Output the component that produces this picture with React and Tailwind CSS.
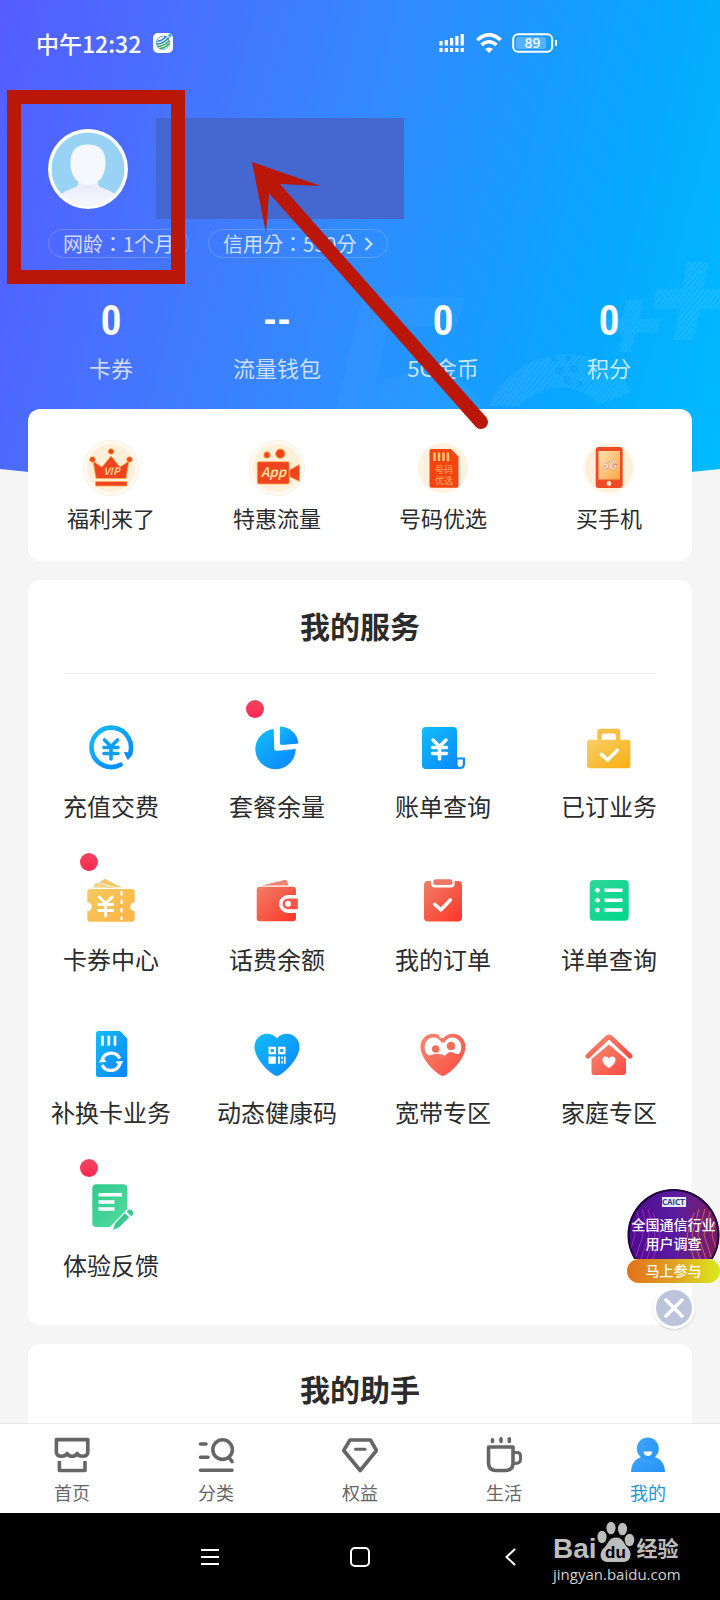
const Gradient = ({ id, from, to }) => (
  <linearGradient id={id} x1="0" y1="0" x2="1" y2="1">
    <stop offset="0" stopColor={from} />
    <stop offset="1" stopColor={to} />
  </linearGradient>
);

// Shared gradients, referenced by every icon below
const IconDefs = () => (
  <svg className="absolute h-0 w-0" aria-hidden="true">
    <defs>
      <Gradient id="blue" from="#12bdf5" to="#0a84ff" />
      <Gradient id="yellow" from="#f6cf6b" to="#fbae0c" />
      <Gradient id="gold" from="#f5c95f" to="#fcb445" />
      <Gradient id="red" from="#ee8068" to="#ff3427" />
      <Gradient id="coral" from="#f08a70" to="#ff4a42" />
      <Gradient id="green" from="#2fd79a" to="#00d68b" />
      <Gradient id="mint" from="#31c98c" to="#55dba2" />
      <Gradient id="tabBlue" from="#41a5fb" to="#2493f5" />
      <Gradient id="screen" from="#ffe3ad" to="#ffa64a" />
    </defs>
  </svg>
);

const Yen = ({ x, y, stroke = "#fff", width = 3.4 }) => (
  <path
    d={`M${x - 6.5} ${y - 9}L${x} ${y - 2.5}L${x + 6.5} ${y - 9}M${x - 7} ${y - 1.5}H${x + 7}M${x - 7} ${y + 4.5}H${x + 7}M${x} ${y - 2}V${y + 10}`}
    fill="none"
    stroke={stroke}
    strokeWidth={width}
    strokeLinecap="round"
    strokeLinejoin="round"
  />
);

const HEART = "M24 46C20 46 1.500 30 1.500 17C1.500 9 7.500 3.700 14 3.700C18 3.700 22 5.500 24 8.500C26 5.500 30 3.700 34 3.700C40.500 3.700 46.500 9 46.500 17C46.500 30 28 46 24 46Z";

const serviceIcons = {
  recharge: (
    <>
      <path d="M33.500 40.700A19.700 19.700 0 1 1 42.400 31" fill="none" stroke="url(#blue)" strokeWidth="4.600" strokeLinecap="round" />
      <path d="M37.500 28.500L45.500 29.500L41 35.500Z" fill="#0a8cfb" stroke="#0a8cfb" strokeLinejoin="round" />
      <Yen x={24} y={25} stroke="#0c9ef9" width={3.600} />
    </>
  ),
  pie: (
    <>
      <path d="M20.700 5A20.200 20.200 0 1 0 42.700 25L24.500 26.800Q21.300 27 21.200 24Z" fill="url(#blue)" />
      <path d="M27 2.600Q43 4 45.500 19.500L29 21Q27 21 26.900 19Z" fill="url(#blue)" />
    </>
  ),
  bill: (
    <>
      <path d="M3 7Q3 3 7 3H34Q38 3 38 7V33.500H46V40Q46 45 41 45H7Q3 45 3 41Z" fill="url(#blue)" />
      <path d="M38.800 35.500H43.800V39.500Q43.800 43 41 43Q38.500 43 38.500 40Z" fill="#fff" />
      <Yen x={20.500} y={25} />
    </>
  ),
  briefcase: (
    <>
      <path d="M12.300 17V7.700Q12.300 4.700 15.300 4.700H32.300Q35.300 4.700 35.300 7.700V17H31V12Q31 9.500 28.500 9.500H19Q16.500 9.500 16.500 12V17Z" fill="#f6bf45" />
      <rect x="2" y="15.700" width="43.400" height="28.600" rx="3" fill="url(#yellow)" />
      <path d="M16.500 30.500L22.800 35.800L32.300 26.200" fill="none" stroke="#fff" strokeWidth="3.600" strokeLinecap="round" strokeLinejoin="round" />
    </>
  ),
  ticket: (
    <>
      <path d="M6 10.500L8 6.500Q9 5.500 11 6L29 11Z" fill="#f3d284" />
      <path d="M12 5.500L17 2.300Q18.500 1.700 20 2.700L35 10.700L28 10Z" fill="#f4c866" />
      <path d="M3.300 12H44.700Q47.700 12 47.700 15V25.200A4.500 4.500 0 0 0 47.700 34.200V41.700Q47.700 44.700 44.700 44.700H3.300Q.3 44.700 .3 41.700V34.200A4.500 4.500 0 0 0 .3 25.200V15Q.3 12 3.300 12Z" fill="url(#gold)" />
      <path d="M34.500 14V43" stroke="#fff" strokeWidth="2.200" strokeDasharray="4.500 4" />
      <Yen x={18.700} y={29} width={2.800} />
    </>
  ),
  wallet: (
    <>
      <path d="M8.700 8.500L31.500 3Q34 2.500 34.500 4.500L35.200 8.500Z" fill="#ef8570" />
      <rect x="3.700" y="9.700" width="39.300" height="34.600" rx="3" fill="url(#red)" />
      <path d="M46 18H35A9 9 0 0 0 35 36H46Z" fill="#fff" />
      <path d="M44.800 21.400H35A5.300 5.300 0 0 0 35 32.200H44.800Z" fill="#fb5549" />
      <circle cx="35" cy="26.800" r="3" fill="#fff" />
    </>
  ),
  order: (
    <>
      <rect x="5" y="4" width="38" height="40.500" rx="4" fill="url(#red)" />
      <rect x="12" y="-2" width="23.700" height="12.400" rx="4" fill="#fff" />
      <rect x="14.300" y="2.300" width="19.200" height="5.700" rx="2.500" fill="#ec7764" />
      <path d="M15.800 27.500L22 32.800L31.300 23" fill="none" stroke="#fff" strokeWidth="3.600" strokeLinecap="round" strokeLinejoin="round" />
    </>
  ),
  detail: (
    <>
      <rect x="4.700" y="3" width="39" height="40.700" rx="4" fill="url(#green)" />
      <path d="M19.500 13.300H37.500M19.500 23.300H37.500M19.500 33H37.500" stroke="#fff" strokeWidth="3.400" />
      <circle cx="12.500" cy="13.300" r="2.300" fill="#fff" />
      <circle cx="12.500" cy="23.300" r="2.300" fill="#fff" />
      <circle cx="12.500" cy="33" r="2.300" fill="#fff" />
    </>
  ),
  sim: (
    <>
      <path d="M9 3.500Q9 1 11.500 1H33L40.300 8.500V44.500Q40.300 47 37.800 47H11.500Q9 47 9 44.500Z" fill="url(#blue)" />
      <path d="M15.500 5.700V15.700M21.800 5.700V15.700M28 5.700V15.700" stroke="#fff" strokeWidth="2.600" />
      <path d="M15.200 29.500A9.500 9.500 0 0 1 32.800 28.500M32.800 34A9.500 9.500 0 0 1 15.200 35" fill="none" stroke="#fff" strokeWidth="3.200" />
      <path d="M11.800 32.500L15.500 26.500L19.500 32Z M36.300 31L32.500 37L28.500 31.500Z" fill="#fff" />
    </>
  ),
  health: (
    <>
      <path d={HEART} fill="url(#blue)" />
      <path d="M16.600 17.900H21.900V23.200H16.600ZM26.100 17.900H31.400V23.200H26.100Z" fill="none" stroke="#fff" strokeWidth="2.200" />
      <path d="M15.500 26.500H22.800V33.700H15.500ZM25 26.500H27V33.700H25ZM28.200 26.500H29.700V29H28.200ZM28.200 30.700H29.700V33.700H28.200ZM30.900 26.500H32.600V33.700H30.900Z" fill="#fff" />
    </>
  ),
  broadband: (
    <>
      <path d={HEART} fill="url(#coral)" />
      <path d="M6 20C4.500 12.500 9 7.500 14.500 7.500C18.500 7.500 21 9.500 22.500 12.500L25.500 12.500C27 9.500 29.500 7.500 33.500 7.500C39 7.500 43.500 12.500 42 20C41 24.500 38 24.500 36 23.500C33 21.500 31 21.500 29 23C27 24.500 26 26.500 24.500 26C22 24 19 23 15 25C10 26.500 7 25 6 20Z" fill="#fff" />
      <path d="M22.300 8L20.500 5.500" stroke="#fff" strokeWidth="1.600" />
      <circle cx="16.700" cy="19" r="3.800" fill="#f0705e" />
      <circle cx="32" cy="16" r="4.300" fill="#f0705e" />
      <path d="M9 28C12 23.500 18 23 21 25.500C24 22 27 27 25 29Z" fill="#f56f5e" />
    </>
  ),
  family: (
    <>
      <path d="M3 26L22 8Q24 6.300 26 8L45 26" fill="none" stroke="url(#coral)" strokeWidth="5" strokeLinecap="round" />
      <path d="M24 14.500L41 29V42Q41 45 38 45H9.500Q6.500 45 6.500 42V29Z" fill="url(#coral)" />
      <path d="M24 38C22 37 17.500 33.500 17.500 29.500C17.500 26 22 25.500 24 28.500C26 25.500 30.500 26 30.500 29.500C30.500 33.500 26 37 24 38Z" fill="#fff" />
    </>
  ),
  feedback: (
    <>
      <path d="M5.300 5.300Q5.300 1.300 9.300 1.300H36.300Q40.300 1.300 40.300 5.300V26L23 44H9.300Q5.300 44 5.300 40Z" fill="url(#mint)" />
      <path d="M11.500 11.800H35M11.500 19H27.500M11.500 26H27.500" stroke="#fff" strokeWidth="3.600" />
      <path d="M25.500 47.500L28 40L38 29.800L42.500 34.200L32.500 44.300Z" fill="#3bc98f" stroke="#fff" strokeWidth=".6" />
      <path d="M39.500 28.500L41.500 26.800Q43.500 26 45.500 28Q47.300 30 46.200 31.500L44 33.300Z" fill="#3bc98f" />
    </>
  ),
};

const quickIcons = {
  vip: (
    <>
      <circle cx="28" cy="28" r="27.500" fill="#fffaf2" stroke="#fbf0df" />
      <circle cx="28" cy="28" r="24" fill="#fdefd8" />
      <g fill="#f0431f" stroke="#f9b04c" strokeWidth=".8">
        <path d="M10 21L13 38.500H43L46 21L37 27L28 16L19 27Z" />
        <rect x="12.500" y="41.500" width="31.500" height="4.500" rx=".5" />
        <circle cx="28" cy="11.500" r="2.800" />
        <circle cx="9.500" cy="19.500" r="2.800" />
        <circle cx="46.500" cy="19.500" r="2.800" />
      </g>
      <text x="28.500" y="35" textAnchor="middle" fontSize="10" fontWeight="700" fontStyle="italic" fill="#fbd28b">VIP</text>
    </>
  ),
  app: (
    <>
      <circle cx="28" cy="28" r="27.500" fill="#fffaf2" stroke="#fbf0df" />
      <circle cx="28" cy="28" r="24" fill="#fdefd8" />
      <g fill="#f0431f" stroke="#f9b04c" strokeWidth=".8">
        <rect x="8.300" y="21.700" width="32" height="22.300" rx="1.500" />
        <path d="M40.300 30L50.500 24.500V41.500L40.300 36.500Z" />
        <circle cx="18" cy="15" r="3.200" />
        <circle cx="31.300" cy="13.700" r="4.700" />
      </g>
      <text x="24.500" y="37" textAnchor="middle" fontSize="13" fontWeight="700" fontStyle="italic" fill="#fbdc9a">App</text>
    </>
  ),
  number: (
    <>
      <circle cx="28" cy="28" r="25" fill="#fdf2de" />
      <path d="M14.500 11Q14.500 9 16.500 9H36L43.500 16.500V45.700Q43.500 47.700 41.500 47.700H16.500Q14.500 47.700 14.500 45.700Z" fill="#f4440f" />
      <path d="M19.500 12.500V21M24 12.500V21M28.500 12.500V21M33 12.500V21" stroke="#fbc87c" strokeWidth="2.400" />
      <text x="29" y="33" textAnchor="middle" fontSize="9" fill="#fdb06a">号码</text>
      <text x="29" y="43.500" textAnchor="middle" fontSize="9" fill="#fdb06a">优选</text>
    </>
  ),
  phone: (
    <>
      <circle cx="28" cy="28" r="27" fill="#fffaf2" />
      <circle cx="28" cy="28" r="24" fill="#fdefd8" />
      <rect x="14.700" y="7" width="27" height="41" rx="3" fill="#ee4a24" />
      <rect x="17.500" y="11" width="21.500" height="28.500" fill="url(#screen)" />
      <text x="28.300" y="29" textAnchor="middle" fontSize="11" fontWeight="700" fontStyle="italic" fill="#fff" stroke="#b9472a" strokeWidth=".3">5G</text>
      <circle cx="28" cy="43.500" r="2.400" fill="#fde6c2" />
    </>
  ),
};

const tabIcons = {
  home: (
    <g fill="none" stroke="#666" strokeWidth="3.600" strokeLinejoin="round">
      <path d="M2.400 2.600H33.800V15.500Q33.300 19.300 28.800 19.300Q24.500 19.300 23.200 16.500Q21.500 19.300 18.100 19.300Q14.700 19.300 13 16.500Q11.700 19.300 7.400 19.300Q2.900 19.300 2.400 15.500Z" />
      <path d="M5.400 24V33.500H31V24" />
    </g>
  ),
  category: (
    <g fill="none" stroke="#666" strokeWidth="3.600" strokeLinecap="round">
      <circle cx="24.600" cy="12.600" r="9.800" />
      <path d="M31 20.500L34 24.500M2.500 7H8M2.500 20.300H10M2.500 33.300H34" />
    </g>
  ),
  rights: (
    <g fill="none" stroke="#666" strokeWidth="3.600" strokeLinejoin="round" strokeLinecap="round">
      <path d="M8 3H28.500L34.500 13.500L18.200 33.500L1.700 13.500Z" />
      <path d="M13.500 12.300H23" strokeWidth="3" />
    </g>
  ),
  life: (
    <g fill="none" stroke="#666" strokeWidth="3.600" strokeLinejoin="round">
      <path d="M2.500 10H27V26Q27 33.500 19.500 33.500H10Q2.500 33.500 2.500 26Z" />
      <path d="M28 15.500H31Q34.500 15.500 34.500 19V22.500Q34.500 26.500 28 26.500" strokeWidth="3" />
      <path d="M6.500 2.800V4.500M15 1.800V4.500M23.300 1.800V4.500" strokeLinecap="round" />
    </g>
  ),
  mine: (
    <>
      <path d="M1 35Q1.500 22 13 19.500H23Q34.500 22 35 35Z" fill="url(#tabBlue)" />
      <circle cx="17.800" cy="11.500" r="11" fill="url(#tabBlue)" />
      <path d="M13.300 14.500H22.500Q21.500 19 18 19Q14.300 19 13.300 14.500Z" fill="#fff" />
    </>
  ),
};

const stats = [
  { value: "0", label: "卡券" },
  { value: "--", label: "流量钱包" },
  { value: "0", label: "5G金币" },
  { value: "0", label: "积分" },
];

const quickLinks = [
  { icon: "vip", label: "福利来了" },
  { icon: "app", label: "特惠流量" },
  { icon: "number", label: "号码优选" },
  { icon: "phone", label: "买手机" },
];

const services = [
  { icon: "recharge", label: "充值交费" },
  { icon: "pie", label: "套餐余量", dot: true },
  { icon: "bill", label: "账单查询" },
  { icon: "briefcase", label: "已订业务" },
  { icon: "ticket", label: "卡券中心", dot: true },
  { icon: "wallet", label: "话费余额" },
  { icon: "order", label: "我的订单" },
  { icon: "detail", label: "详单查询" },
  { icon: "sim", label: "补换卡业务" },
  { icon: "health", label: "动态健康码" },
  { icon: "broadband", label: "宽带专区" },
  { icon: "family", label: "家庭专区" },
  { icon: "feedback", label: "体验反馈", dot: true },
];

const tabs = [
  { icon: "home", label: "首页" },
  { icon: "category", label: "分类" },
  { icon: "rights", label: "权益" },
  { icon: "life", label: "生活" },
  { icon: "mine", label: "我的", active: true },
];

const HeaderBackground = () => (
  <div className="absolute inset-x-0 top-0 h-[489px] overflow-hidden bg-[linear-gradient(105deg,#555cff_0%,#4a6eff_20%,#338aff_48%,#08a6ff_78%,#00bcff_100%)] [clip-path:ellipse(177%_100%_at_50%_0)]">
    <svg className="absolute right-0 top-0" width="400" height="489" viewBox="320 0 400 489" aria-hidden="true">
      <defs>
        <pattern id="hatch" width="4" height="4" patternUnits="userSpaceOnUse" patternTransform="rotate(40)">
          <rect width="2" height="4" fill="#fff" fillOpacity=".05" />
          <rect width="4" height="4" fill="#fff" fillOpacity=".03" />
        </pattern>
      </defs>
      <path d="M362 297H465L456 326H388L376 385Q440 350 480 400V420H334Z" fill="#fff" fillOpacity=".03" />
      <path d="M488 406Q516 354 570 354Q612 356 632 392L600 404Q560 370 518 406Z" fill="url(#hatch)" />
      <path d="M687 262H709L703 289H728V309H700L693 340H673L680 309H653L656 289H682Z" fill="url(#hatch)" />
      <path d="M626 300H643L639 319H660L657 333H636L631 352H619L623 333H603L607 319H622Z" fill="url(#hatch)" />
      <g fill="#0a8ff0" fillOpacity=".3">
        <circle cx="554" cy="359" r="3" />
        <circle cx="569" cy="358" r="3" />
        <circle cx="559" cy="371" r="4" />
        <circle cx="574" cy="369" r="4" />
        <circle cx="567" cy="380" r="4" />
        <circle cx="580" cy="384" r="3" />
      </g>
    </svg>
  </div>
);

const StatusBar = () => (
  <div className="flex h-[30px] items-center justify-between pl-9 pr-[162px] text-white">
    <div className="flex items-center gap-3">
      <span className="text-[23px] font-medium leading-[28px]">中午12:32</span>
      <svg width="20" height="20" viewBox="0 0 20 20" aria-hidden="true">
        <rect width="20" height="20" rx="5" fill="#fff" />
        <g fill="none" strokeWidth="1.600" strokeLinecap="round">
          <path d="M5 8Q9 8 13 3.500M4 11Q10 11 15.500 5" stroke="#2a7fd0" />
          <path d="M4.500 13.500Q11 13 16 8M7 15.500Q12 15 15.500 11" stroke="#3aa55c" />
          <circle cx="10" cy="9.800" r="6.600" stroke="#3b97b8" strokeWidth=".8" />
        </g>
        <circle cx="17" cy="2.500" r="1.800" fill="#4ab0ea" />
      </svg>
    </div>
    <div className="flex items-center">
      <svg width="25" height="20" viewBox="0 0 25 20" fill="none" stroke="#fff" strokeWidth="3.200" aria-hidden="true">
        <path d="M2 15V19M7.300 15V19M12.600 15V19M17.900 15V19M23.200 15V19M2 8V12.500M7.300 7V12.500M12.600 5V12.500M17.900 3V12.500M23.200 1V12.500" />
      </svg>
      <svg className="ml-3" width="26" height="20" viewBox="0 0 26 20" fill="none" stroke="#fff" strokeWidth="3.600" aria-hidden="true">
        <path d="M1.300 7Q13-3.500 24.700 7M5.500 12Q13 5.500 20.500 12" />
        <path d="M9 16Q13 13 17 16L13 20Z" fill="#fff" stroke="none" />
      </svg>
      <svg className="ml-2.5" width="46" height="20" viewBox="0 0 46 20" aria-hidden="true">
        <rect x="1.200" y="1.200" width="39" height="17.600" rx="5" fill="none" stroke="#fff" strokeWidth="2" />
        <rect x="4" y="4" width="30" height="12" rx="2" fill="#fff" fillOpacity=".25" />
        <path d="M44 7V13" stroke="#fff" strokeWidth="2" />
        <text x="20.500" y="15" textAnchor="middle" fontSize="14" fontWeight="500" fill="#fff">89</text>
      </svg>
    </div>
  </div>
);

const Avatar = () => (
  <svg width="80" height="80" viewBox="0 0 80 80" aria-hidden="true">
    <defs>
      <clipPath id="face">
        <circle cx="40" cy="40" r="37" />
      </clipPath>
      <linearGradient id="neck" x1="0" y1="0" x2="0" y2="1">
        <stop offset="0" stopColor="#e4e9f9" />
        <stop offset="1" stopColor="#f9faff" />
      </linearGradient>
    </defs>
    <circle cx="40" cy="40" r="40" fill="#fff" />
    <circle cx="40" cy="40" r="36.500" fill="#98d3f5" />
    <g clipPath="url(#face)">
      <path d="M8 70Q14 62 28 58Q31 56 30 50H50Q49 56 52 58Q66 62 72 70V80H8Z" fill="url(#neck)" />
      <path d="M40 15.500C52 15.500 57.500 22 57.500 34C57.500 48 49 56.500 40 56.500C31 56.500 22.500 48 22.500 34C22.500 22 28 15.500 40 15.500Z" fill="#f7f8ff" />
    </g>
  </svg>
);

const Profile = () => (
  <div className="mt-[71px] px-12">
    <button type="button" aria-label="头像" className="block h-20 w-20 rounded-full">
      <Avatar />
    </button>
    <div className="mt-5 flex gap-[19px] font-['Noto_Sans_CJK_TC','Noto_Sans_CJK_SC',sans-serif] text-xl leading-[27px] text-white/75">
      <a href="#age" className="rounded-full border border-white/20 px-[14px]">
        网龄：1个月
      </a>
      <a href="#credit" className="flex items-center gap-2 rounded-full border border-white/20 px-[14px]">
        信用分：550分
        <svg width="9" height="14" viewBox="0 0 9 14" fill="none" stroke="currentColor" strokeWidth="2" aria-hidden="true">
          <path d="M1.500 1L7.500 7L1.500 13" />
        </svg>
      </a>
    </div>
  </div>
);

const Stats = () => (
  <div className="mx-7 mt-[43px] grid grid-cols-4 text-center text-white">
    {stats.map((item) => (
      <a key={item.label} href="#stats" className="block">
        <div className="font-['Roboto_Condensed','Open_Sans_Condensed','Noto_Sans_Condensed','DejaVu_Sans_Condensed','Roboto',sans-serif] text-[42px] font-semibold leading-10">
          {item.value}
        </div>
        <div className="mt-[11px] text-[22px] leading-[30px] text-white/75">{item.label}</div>
      </a>
    ))}
  </div>
);

const QuickLinks = () => (
  <section className="mx-7 mt-[27px] grid grid-cols-4 rounded-xl bg-white pb-[29px] pt-[31px]">
    {quickLinks.map((item) => (
      <a key={item.label} href="#quick" className="flex flex-col items-center gap-1.5">
        <svg width="56" height="56" viewBox="0 0 56 56" aria-hidden="true">
          {quickIcons[item.icon]}
        </svg>
        <span className="text-[22px] leading-[30px]">{item.label}</span>
      </a>
    ))}
  </section>
);

const Services = () => (
  <section className="mx-7 mt-[19px] rounded-xl bg-white pb-11 pt-[27px]">
    <h2 className="mx-9 border-b border-[#ececec] pb-[30px] text-center text-[30px] font-bold leading-9">我的服务</h2>
    <div className="mt-[50px] grid grid-cols-4 gap-y-[55px]">
      {services.map((item) => (
        <a key={item.label} href="#service" className="flex flex-col items-center gap-[18px]">
          <span className="relative">
            <svg width="48" height="48" viewBox="0 0 48 48" aria-hidden="true">
              {serviceIcons[item.icon]}
            </svg>
            {item.dot && (
              <span className="absolute -left-[7px] -top-6 h-[18px] w-[18px] rounded-full bg-linear-to-b from-[#ee4460] to-[#ff2350]" />
            )}
          </span>
          <span className="whitespace-nowrap text-2xl leading-8">{item.label}</span>
        </a>
      ))}
    </div>
  </section>
);

const SurveyBadge = () => (
  <div className="absolute bottom-[94px] right-0 flex w-[93px] flex-col items-center">
    <a href="#survey" className="block w-full text-center font-medium text-white">
      <div className="relative h-[70px] bg-linear-to-r from-[#4c0a8c] via-[#5a1aa0] to-[#7a1763] [clip-path:circle(46px_at_50%_46px)]">
        <svg className="absolute inset-0" width="93" height="70" viewBox="0 0 93 70" fill="none" aria-hidden="true">
          <g stroke="#b02fd0" strokeOpacity=".75">
            <path d="M3 26L8 46L2 66M9 20L16 46L8 70M15 20L22 46L14 70M21 20L28 46L20 70M26 24L33 46L26 70" />
          </g>
          <g stroke="#f0705a" strokeOpacity=".75">
            <path d="M90 26L85 46L91 66M84 20L77 46L85 70M78 20L71 46L79 70M72 20L65 46L73 70M67 24L60 46L67 70" />
          </g>
          <circle cx="46.500" cy="46" r="45" stroke="#1d0836" strokeWidth="2" />
        </svg>
        <div className="relative pt-2">
          <div className="mx-auto w-6 bg-[#e9ecf5] text-[8px] font-bold leading-[10px] text-[#1f3c8c]">CAICT</div>
          <div className="mt-2 whitespace-nowrap text-sm leading-[19px]">全国通信行业</div>
          <div className="text-sm leading-[19px]">用户调查</div>
        </div>
      </div>
      <div className="h-6 rounded-full bg-linear-to-r from-[#e2711c] via-[#dfa024] to-[#d8ea1c] text-sm leading-[22px]">马上参与</div>
    </a>
    <button
      type="button"
      aria-label="关闭"
      className="mt-1 flex h-[42px] w-[42px] items-center justify-center rounded-full border-[3px] border-white bg-[#bcc4dc] shadow-sm"
    >
      <svg width="20" height="20" viewBox="0 0 20 20" stroke="#fff" strokeWidth="3.500" strokeLinecap="round" aria-hidden="true">
        <path d="M2 2L18 18M18 2L2 18" />
      </svg>
    </button>
  </div>
);

// Red frame, masked name and arrow drawn over the profile area
const Annotations = () => (
  <>
    <div className="pointer-events-none absolute left-[156px] top-[118px] h-[101px] w-[248px] bg-[#4467d0]" />
    <div className="pointer-events-none absolute left-[7px] top-[90px] h-[194px] w-[178px] border-[14px] border-[#bb1709]" />
    <svg className="pointer-events-none absolute left-[240px] top-[150px]" width="260" height="290" viewBox="240 150 260 290" aria-hidden="true">
      <path d="M274 188L481 422" stroke="#bb1709" strokeWidth="14" strokeLinecap="round" />
      <path d="M252 162L321 186L281 184L269 193L266 233Z" fill="#bb1709" />
    </svg>
  </>
);

const TabBar = () => (
  <nav className="grid h-[90px] shrink-0 grid-cols-5 border-t border-[#e9e9e9] bg-white pt-[13px]">
    {tabs.map((tab) => (
      <a key={tab.label} href="#tab" className="flex flex-col items-center gap-[7px]">
        <svg width="36" height="36" viewBox="0 0 36 36" aria-hidden="true">
          {tabIcons[tab.icon]}
        </svg>
        <span className={tab.active ? "text-lg leading-6 text-[#1b98dd]" : "text-lg leading-6 text-[#666]"}>{tab.label}</span>
      </a>
    ))}
  </nav>
);

const Watermark = () => (
  <div className="absolute right-10 top-2 w-[127px] whitespace-nowrap font-['Liberation_Sans','Noto_Sans_CJK_SC',sans-serif] text-[#bdbdbd]">
    <div className="flex h-[42px] items-end">
      <span className="text-[28px] font-bold leading-7">Bai</span>
      <svg className="shrink-0" width="38" height="42" viewBox="0 0 38 42" fill="#bdbdbd" aria-hidden="true">
        <ellipse cx="5" cy="16" rx="4.600" ry="6.200" />
        <ellipse cx="14" cy="7" rx="4.600" ry="6.300" />
        <ellipse cx="25.500" cy="8" rx="4.600" ry="6.300" />
        <ellipse cx="32.500" cy="19" rx="4.800" ry="6.200" />
        <path d="M19 16.500C26 16.500 27 23 31 27C35 31 35 41 26 41H11C2 41 2 31 7 27C11 23 12 16.500 19 16.500Z" />
        <text x="18.500" y="36.500" textAnchor="middle" fontSize="17" fontWeight="700" fill="#000">du</text>
      </svg>
      <span className="ml-0.5 text-[21px] font-bold leading-7">经验</span>
    </div>
    <div className="font-['Open_Sans','Noto_Sans',sans-serif] text-[15px] leading-[22px] text-[#d0d0d0]">jingyan.baidu.com</div>
  </div>
);

const SystemBar = () => (
  <div className="relative flex h-[87px] shrink-0 items-center justify-center gap-[102px] bg-black">
    <button type="button" aria-label="菜单" className="flex h-12 w-12 items-center justify-center">
      <svg width="18" height="16" viewBox="0 0 18 16" stroke="#fff" strokeWidth="2">
        <path d="M0 1H18M0 8H18M0 15H18" />
      </svg>
    </button>
    <button type="button" aria-label="主页" className="flex h-12 w-12 items-center justify-center">
      <svg width="20" height="20" viewBox="0 0 20 20" fill="none" stroke="#fff" strokeWidth="2">
        <rect x="1" y="1" width="18" height="18" rx="4" />
      </svg>
    </button>
    <button type="button" aria-label="返回" className="flex h-12 w-12 items-center justify-center">
      <svg width="11" height="18" viewBox="0 0 11 18" fill="none" stroke="#fff" strokeWidth="2">
        <path d="M10 1L1.500 9L10 17" />
      </svg>
    </button>
    <Watermark />
  </div>
);

const App = () => (
  <div className="flex h-screen flex-col bg-[#f5f5f5] font-['Noto_Sans_CJK_SC',sans-serif] text-[#2b2b2b]">
    <IconDefs />
    <main className="relative min-h-0 flex-1 overflow-hidden">
      <HeaderBackground />
      <div className="relative pt-7">
        <StatusBar />
        <Profile />
        <Stats />
        <QuickLinks />
        <Services />
        <section className="mx-7 mt-[19px] rounded-t-xl bg-white pb-10 pt-[26px]">
          <h2 className="text-center text-[30px] font-bold leading-9">我的助手</h2>
        </section>
      </div>
      <SurveyBadge />
      <Annotations />
    </main>
    <TabBar />
    <SystemBar />
  </div>
);

export default App;
